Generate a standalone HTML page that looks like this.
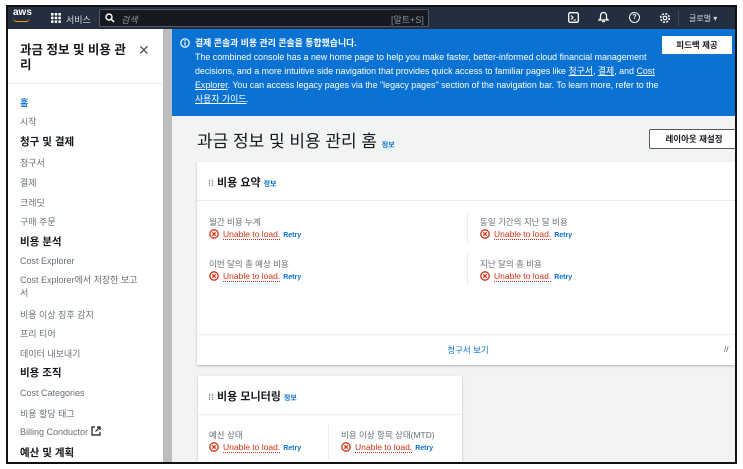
<!DOCTYPE html>
<html><head><meta charset="utf-8"><style>
*{box-sizing:border-box;margin:0;padding:0}
body{width:743px;height:469px;background:#fff;font-family:"Liberation Sans","Noto Sans CJK KR",sans-serif;position:relative;overflow:hidden}
.frame{position:absolute;left:6px;top:5px;width:731px;height:459px;border:2px solid #111;overflow:hidden;background:#f2f3f3}
.nav{position:absolute;left:0;top:0;right:0;height:22px;background:#232f3e;color:#d5dbdb;font-size:9px}
.abs{position:absolute}
.side{position:absolute;left:0;top:22px;width:155px;bottom:0;background:#fff}
.scroll{position:absolute;left:155px;top:22px;width:9px;bottom:0;background:#bdbdbd}
.side div{position:absolute;left:12px;font-size:9px;color:#687078}
.side b{position:absolute;left:12px;font-size:10.5px;color:#16191f}
.banner{position:absolute;left:164px;top:22px;right:0;height:87px;background:#0972d3;color:#fff;font-size:8.9px;line-height:14px}
.banner u{text-decoration:underline}
.card{position:absolute;background:#fff;box-shadow:0 1px 2px rgba(0,0,0,.25)}
.lbl{position:absolute;font-size:8.5px;color:#687078}
.err{position:absolute;font-size:8.5px;color:#d13212;white-space:nowrap}
.err svg{vertical-align:-2px;margin-right:4px}
.err span{border-bottom:1px dotted #d13212}
.err em{font-style:normal;color:#0972d3;font-size:7px;font-weight:bold;margin-left:3px}
.info{color:#0972d3;font-size:7px;font-weight:bold}
</style></head><body>
<svg width="0" height="0" style="position:absolute"><defs><symbol id="x" viewBox="0 0 10 10"><circle cx="5" cy="5" r="4.2" fill="none" stroke="#d13212" stroke-width="1.3"/><path d="M3.3 3.3L6.7 6.7M6.7 3.3L3.3 6.7" stroke="#d13212" stroke-width="1.3"/></symbol></defs></svg>
<div class="frame">
<div class="nav">
 <div class="abs" style="left:5px;top:0px;color:#fff;font-size:10px;font-weight:bold">aws</div>
 <div class="abs" style="left:5px;top:11px;width:17px;height:4px;border-bottom:1.5px solid #f90;border-radius:0 0 9px 9px"></div>
 <svg class="abs" style="left:43px;top:6px" width="10" height="10" viewBox="0 0 10 10" fill="#fff"><rect x="0" y="0" width="2.5" height="2.5"/><rect x="3.7" y="0" width="2.5" height="2.5"/><rect x="7.4" y="0" width="2.5" height="2.5"/><rect x="0" y="3.7" width="2.5" height="2.5"/><rect x="3.7" y="3.7" width="2.5" height="2.5"/><rect x="7.4" y="3.7" width="2.5" height="2.5"/><rect x="0" y="7.4" width="2.5" height="2.5"/><rect x="3.7" y="7.4" width="2.5" height="2.5"/><rect x="7.4" y="7.4" width="2.5" height="2.5"/></svg>
 <div class="abs" style="left:58px;top:6px">서비스</div>
 <div class="abs" style="left:91px;top:2px;width:330px;height:18px;border:1px solid #545b64;border-radius:2px;background:#16191f"></div>
 <svg class="abs" style="left:97px;top:6px" width="10" height="10" viewBox="0 0 10 10"><circle cx="4" cy="4" r="3" fill="none" stroke="#fff" stroke-width="1.4"/><path d="M6.2 6.2L9 9" stroke="#fff" stroke-width="1.5"/></svg>
 <div class="abs" style="left:113px;top:6px;font-style:italic;color:#879596">검색</div>
 <div class="abs" style="left:383px;top:6px;color:#879596">[알트+S]</div>
 <svg class="abs" style="left:560px;top:5px" width="11" height="11" viewBox="0 0 11 11"><rect x=".7" y=".7" width="9.6" height="9.6" rx="1.5" fill="none" stroke="#fff" stroke-width="1.3"/><path d="M3 3.5L5 5.5L3 7.5M5.5 8H8" stroke="#fff" stroke-width="1.1" fill="none"/></svg>
 <svg class="abs" style="left:590px;top:4px" width="11" height="12" viewBox="0 0 11 12"><path d="M5.5 1.5C3.5 1.5 2.5 3 2.5 5v2.5L1 9h9L8.5 7.5V5c0-2-1-3.5-3-3.5z" fill="none" stroke="#fff" stroke-width="1.3"/><path d="M4 10.5h3" stroke="#fff" stroke-width="1.3"/></svg>
 <div class="abs" style="left:621px;top:5px;width:11px;height:11px;border:1.3px solid #fff;border-radius:50%;font-size:7px;color:#fff;text-align:center;line-height:9px;font-weight:bold">?</div>
 <svg class="abs" style="left:651px;top:5px" width="12" height="12" viewBox="0 0 12 12"><circle cx="6" cy="6" r="4.3" fill="none" stroke="#fff" stroke-width="1.6" stroke-dasharray="2 1.4"/><circle cx="6" cy="6" r="1.8" fill="none" stroke="#fff" stroke-width="1.2"/></svg>
 <div class="abs" style="left:670px;top:3px;width:1px;height:16px;background:#414750"></div>
 <div class="abs" style="left:681px;top:6px;font-size:8px">글로벌 ▾</div>
</div>
<div class="side">
 <div style="left:12px;top:14px;font-size:12.5px;color:#16191f;font-weight:bold;line-height:15px;width:114px">과금 정보 및 비용 관리</div>
 <div style="left:130px;top:13px;font-size:14px;color:#545b64">✕</div>
 <div style="left:0;top:54px;width:155px;height:1px;background:#eaeded"></div>
 <div style="top:67px;color:#0972d3;font-weight:bold">홈</div>
 <div style="top:86px">시작</div>
 <b style="top:105px">청구 및 결제</b>
 <div style="top:127px">청구서</div>
 <div style="top:147px">결제</div>
 <div style="top:167px">크레딧</div>
 <div style="top:186px">구매 주문</div>
 <b style="top:205px">비용 분석</b>
 <div style="top:227px">Cost Explorer</div>
 <div style="top:245px;width:125px;line-height:13px">Cost Explorer에서 저장한 보고서</div>
 <div style="top:279px">비용 이상 징후 감지</div>
 <div style="top:298px">프리 티어</div>
 <div style="top:318px">데이터 내보내기</div>
 <b style="top:336px">비용 조직</b>
 <div style="top:359px">Cost Categories</div>
 <div style="top:378px">비용 할당 태그</div>
 <div style="top:397px">Billing Conductor <svg width="10" height="10" viewBox="0 0 10 10" style="vertical-align:-1px"><path d="M4 1H1v8h8V6M6 1h3v3M9 1L4.5 5.5" fill="none" stroke="#16191f" stroke-width="1.2"/></svg></div>
 <b style="top:416px">예산 및 계획</b>
</div>
<div class="scroll"></div>
<div class="banner">
 <svg class="abs" style="left:8px;top:9px" width="10" height="10" viewBox="0 0 10 10"><circle cx="5" cy="5" r="4.2" fill="none" stroke="#fff" stroke-width="1.2"/><path d="M5 4.2V7.5" stroke="#fff" stroke-width="1.2"/><circle cx="5" cy="2.8" r=".7" fill="#fff"/></svg>
 <div class="abs" style="left:23px;top:7px;width:465px"><b>결제 콘솔과 비용 관리 콘솔을 통합했습니다.</b><br>The combined console has a new home page to help you make faster, better-informed cloud financial management decisions, and a more intuitive side navigation that provides quick access to familiar pages like <u>청구서</u>, <u>결제</u>, and <u>Cost Explorer</u>. You can access legacy pages via the "legacy pages" section of the navigation bar. To learn more, refer to the <u>사용자 가이드</u>.</div>
 <div class="abs" style="left:490px;top:7px;width:70px;height:18px;background:#fff;color:#16191f;font-size:8.5px;text-align:center;line-height:18px;font-weight:bold">피드백 제공</div>
</div>
<div class="abs" style="left:189px;top:120px;font-size:17px;color:#16191f">과금 정보 및 비용 관리 홈 <span class="info">정보</span></div>
<div class="abs" style="left:641px;top:122px;width:90px;height:20px;background:#fff;border:1px solid #545b64;border-radius:2px;font-size:8.5px;text-align:center;line-height:18px;color:#16191f;font-weight:bold">레이아웃 재설정</div>
<div class="card" style="left:189px;top:155px;width:542px;height:203px">
 <div class="abs" style="left:11px;top:12px;font-size:11px;font-weight:bold;color:#16191f"><span style="color:#879596;font-size:9px">⁞⁞</span> 비용 요약 <span class="info">정보</span></div>
 <div class="abs" style="left:0;top:38px;width:100%;height:1px;background:#eaeded"></div>
 <div class="lbl" style="left:12px;top:54px">월간 비용 누계</div>
 <div class="err" style="left:12px;top:67px"><svg width="10" height="10"><use href="#x"/></svg><span>Unable to load.</span><em>Retry</em></div>
 <div class="lbl" style="left:12px;top:96px">이번 달의 총 예상 비용</div>
 <div class="err" style="left:12px;top:109px"><svg width="10" height="10"><use href="#x"/></svg><span>Unable to load.</span><em>Retry</em></div>
 <div class="abs" style="left:270px;top:50px;width:1px;height:32px;background:#eaeded"></div>
 <div class="abs" style="left:270px;top:92px;width:1px;height:32px;background:#eaeded"></div>
 <div class="lbl" style="left:283px;top:54px">동일 기간의 지난 달 비용</div>
 <div class="err" style="left:283px;top:67px"><svg width="10" height="10"><use href="#x"/></svg><span>Unable to load.</span><em>Retry</em></div>
 <div class="lbl" style="left:283px;top:96px">지난 달의 총 비용</div>
 <div class="err" style="left:283px;top:109px"><svg width="10" height="10"><use href="#x"/></svg><span>Unable to load.</span><em>Retry</em></div>
 <div class="abs" style="left:0;top:172px;width:100%;height:1px;background:#eaeded"></div>
 <div class="abs" style="left:0;top:182px;width:100%;text-align:center;font-size:8.5px;color:#0972d3">청구서 보기</div>
 <div class="abs" style="left:527px;top:183px;font-size:8px;color:#545b64">//</div>
</div>
<div class="card" style="left:190px;top:369px;width:264px;height:95px">
 <div class="abs" style="left:10px;top:12px;font-size:11px;font-weight:bold;color:#16191f"><span style="color:#879596;font-size:9px">⁞⁞</span> 비용 모니터링 <span class="info">정보</span></div>
 <div class="abs" style="left:0;top:38px;width:100%;height:1px;background:#eaeded"></div>
 <div class="lbl" style="left:11px;top:53px">예산 상태</div>
 <div class="err" style="left:11px;top:66px"><svg width="10" height="10"><use href="#x"/></svg><span>Unable to load.</span><em>Retry</em></div>
 <div class="abs" style="left:130px;top:48px;width:1px;height:36px;background:#eaeded"></div>
 <div class="lbl" style="left:143px;top:53px">비용 이상 항목 상태(MTD)</div>
 <div class="err" style="left:143px;top:66px"><svg width="10" height="10"><use href="#x"/></svg><span>Unable to load.</span><em>Retry</em></div>
</div>
</div>
</body></html>
